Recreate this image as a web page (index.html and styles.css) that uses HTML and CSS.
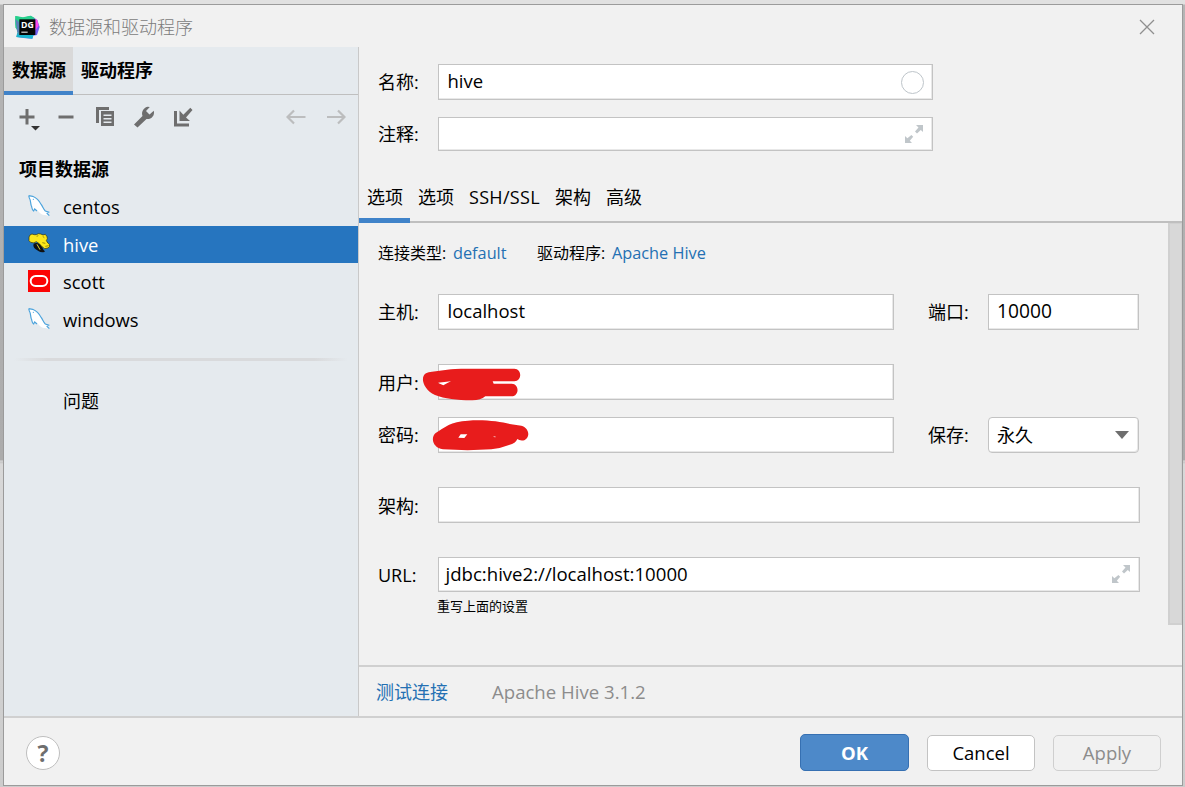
FILE: index.html
```html
<!DOCTYPE html>
<html lang="zh-CN">
<head>
<meta charset="utf-8">
<title>数据源和驱动程序</title>
<link rel="stylesheet" href="styles.css">
</head>
<body>
<svg class="defs" aria-hidden="true">
  <symbol id="dolphin" viewBox="0 0 66 66">
    <path d="M2 2 L14 4 C28 10 35 20 40 29 C46 39 47 44 52 48 L64 53 L58 56 L64 62 L50 60 C42 60 36 56 31 49 C27 45 24 43 20 43 L18 49 C11 43 13 38 10 32 C7 25 8 17 3 9 Z" fill="#fff"/>
    <path d="M14 4 C28 10 35 20 40 29 C46 39 47 44 52 48 L64 52 M56 54 L64 62 M2 2 L14 4 M2 2 L4 9 C9 17 7 25 10 32 C13 38 10 43 17 48 L20 42 L27 48" fill="none" stroke="#4ba3dc" stroke-width="3.500"/>
    <circle cx="16" cy="13" r="1.8" fill="#4ba3dc"/>
  </symbol>
  <symbol id="expand" viewBox="0 0 18 18">
    <path d="M11 0H18V7L15.800 4.900L12 8.400L10 6.400L13.500 2.500ZM0 11L2.400 13.200L6.400 10L8.200 11.800L4.800 15.700L7 18H0Z" fill="#c0c6ca"/>
  </symbol>
</svg>
<div class="dialog">
  <header class="titlebar">
    <svg class="logo" width="25" height="24" viewBox="0 0 75 72">
      <defs><linearGradient id="lg" x1="0" y1="0" x2="1" y2="1"><stop offset="0" stop-color="#21d789"/><stop offset=".4" stop-color="#3fa6b0"/><stop offset=".7" stop-color="#7b5cf0"/><stop offset="1" stop-color="#5a63ee"/></linearGradient></defs>
      <path d="M1 3L24 8 48 2 58 9 67 15 74 36 66 60 54 62 52 71 25 69 4 66 7 52 1 28Z" fill="url(#lg)"/>
      <path d="M1 3L24 7 46 2 59 9 40 15H13V48L1 38Z" fill="#27d08d"/>
      <path d="M1 12L13 22V52L7 52Z" fill="#5b80b8"/>
      <path d="M61 11L67 15 71 32 61 46Z" fill="#ff45ed"/>
      <path d="M7 55L13 60H56L52 71 4 66Z" fill="#1bb5cf"/>
      <rect x="13" y="13" width="48" height="47" fill="#050505"/>
      <text x="37" y="38" class="logo-text" text-anchor="middle">DG</text>
      <rect x="19" y="50" width="19" height="3" fill="#fff"/>
    </svg>
    <span class="title">数据源和驱动程序</span>
    <svg class="close" width="16" height="16" viewBox="0 0 16 16"><path d="M1 1L15 15M15 1L1 15" stroke="#8f8f8f" stroke-width="1.3"/></svg>
  </header>
  <div class="body">
    <aside class="sidebar">
      <nav class="side-tabs"><span class="side-tab active">数据源</span><span class="side-tab">驱动程序</span></nav>
      <div class="toolbar">
        <svg width="184" height="28" viewBox="0 0 184 28">
          <g fill="#6e6e6e">
            <path d="M6.500 6h3v6.500H15.500v3H9.500V21.500h-3v-6H.5v-3h6Z"/>
            <path d="M39.500 12.500h15v3h-15Z"/>
            <path d="M77 4h13v3H80v13h-3Z"/>
            <path fill-rule="evenodd" d="M82 8h13v15H82ZM84.500 11.500v1.500h8V11.500ZM84.500 15V16.500h8V15ZM84.500 18.500V20h8v-1.500Z"/>
            <path d="M115 21.500L123.500 13C122.200 9 124 5 128.500 3.700L130.800 4L127 8L130.500 11.500L134.800 7.700C136 12.500 132.500 16.500 127.500 16L118.500 24.500Z"/>
            <path d="M155 8h3v12.500h12v3H155Z"/>
            <path d="M160.500 7.500V18h10.500l-4-3.600L173.500 7 171.300 4.800 164.300 11.700Z"/>
          </g>
          <path d="M12 23h9L16.500 27.500Z" fill="#333"/>
        </svg>
        <svg width="60" height="16" viewBox="0 0 60 16" fill="none" stroke="#bcbdbe" stroke-width="2.200"><path d="M1 8H19.500M8 1.500L1.500 8L8 14.500M41 8H59M52 1.500L58.500 8L52 14.500"/></svg>
      </div>
      <div class="group">项目数据源</div>
      <ul class="sources">
        <li><svg width="22" height="22"><use href="#dolphin"/></svg>centos</li>
        <li class="selected"><svg width="22" height="22" viewBox="0 0 66 66">
          <path d="M17 32C25 27 38 31 43 42C45 53 54 54 49 57C37 60 31 54 23 49C16 43 15 38 17 32Z" fill="#111"/>
          <path d="M27 34L36 50" stroke="#e8d632" stroke-width="3"/>
          <path d="M3 12Q5 4 12 3Q18 6 25 5Q31 0 38 3Q46 8 52 4L57 11Q60 17 55 23Q59 31 65 35Q66 42 60 45L50 47 42 41 34 32 25 26Q17 32 8 28L3 23Z" fill="#fbe71c" stroke="#333208" stroke-width="2"/>
          <path d="M43 29L52 31M52 40L62 38M26 10L31 8M44 10L49 14" stroke="#6b6208" stroke-width="2"/>
        </svg>hive</li>
        <li><svg width="22" height="22" viewBox="0 0 66 66"><rect width="66" height="66" fill="#fb0505"/><rect x="8" y="18" width="50" height="30" rx="15" fill="none" stroke="#fff" stroke-width="6"/></svg>scott</li>
        <li><svg width="22" height="22"><use href="#dolphin"/></svg>windows</li>
      </ul>
      <div class="rule"></div>
      <div class="problems">问题</div>
    </aside>
    <main class="main">
      <section class="identity">
        <div class="row name"><label>名称:</label><div class="field"><span>hive</span><i class="ring"></i></div></div>
        <div class="row note"><label>注释:</label><div class="field"><svg class="expand" width="18" height="18"><use href="#expand"/></svg></div></div>
      </section>
      <nav class="tabs"><span class="tab active">选项</span><span class="tab">选项</span><span class="tab ssl">SSH/SSL</span><span class="tab">架构</span><span class="tab">高级</span></nav>
      <div class="scroll">
        <section class="form">
          <div class="meta"><span class="cn">连接类型:</span><a class="type">default</a><span class="cn">驱动程序:</span><a>Apache Hive</a></div>
          <div class="row host"><label>主机:</label><div class="field"><span>localhost</span></div><label class="second">端口:</label><div class="field small"><span class="num">10000</span></div></div>
          <div class="row user"><label>用户:</label><div class="field">
            <svg class="scribble" width="100" height="34" viewBox="183 263 300 102"><path fill="#e81c1c" fill-rule="evenodd" d="M213 274L270 267Q280 265 300 265H460C483 266 484 301 460 303H395L398 310H452C476 311 475 347 452 348H373Q358 361 330 360C290 360 250 355 222 344C185 327 177 289 195 279Q202 274 213 274ZM230 307L247 315Q260 307 270 303Z"/></svg>
          </div></div>
          <div class="row pass"><label>密码:</label><div class="field">
            <svg class="scribble" width="98" height="32" viewBox="212 416 294 96"><path fill="#e81c1c" fill-rule="evenodd" d="M262 434Q282 423 320 421C370 417 420 424 450 432L480 436C500 441 507 464 495 475C488 483 474 481 468 476Q463 489 443 494Q415 505 390 507Q320 512 245 507C215 503 207 474 222 459Q240 446 262 434ZM298 462L291 472L309 473L318 462ZM395 467L400 471L405 470Z"/></svg>
          </div><label class="second">保存:</label><div class="field small select"><span>永久</span><svg width="14" height="8" viewBox="0 0 14 8"><path d="M0 0H14L7 8Z" fill="#6e6e6e"/></svg></div></div>
          <div class="row schema"><label>架构:</label><div class="field"></div></div>
          <div class="row url"><label>URL:</label><div class="field"><span>jdbc:hive2://localhost:10000</span><svg class="expand" width="18" height="18"><use href="#expand"/></svg></div></div>
          <div class="hint">重写上面的设置</div>
        </section>
        <div class="scrollbar"></div>
      </div>
      <div class="test"><a>测试连接</a><span>Apache Hive 3.1.2</span></div>
    </main>
  </div>
  <footer class="footer">
    <span class="help">?</span>
    <button class="btn ok">OK</button><button class="btn cancel">Cancel</button><button class="btn apply" disabled>Apply</button>
  </footer>
</div>
</body>
</html>
```
FILE: styles.css
```css
* { box-sizing: border-box; }
body {
  margin: 0; width: 1185px; height: 787px; overflow: hidden; padding: 4px 2px 1px 3px;
  font: 18px/24px "Open Sans", "Noto Sans CJK SC", sans-serif; color: #000;
  background: linear-gradient(#e1e1e1 4px, #b5b5b5 5px, #acacac 460px, #dadada 461px, #c4c4c4 462px, #d8d8d8 464px, #ccc);
}
.defs { display: none; }
.dialog { width: 1180px; height: 782px; border: 1px solid #9b9b9b; background: #f1f1f1; display: flex; flex-direction: column; }
.titlebar { height: 42px; display: flex; align-items: center; padding: 2px 27px 0 11px; }
.logo-text { font: bold 26px "Open Sans", sans-serif; fill: #fff; }
.title { margin-left: 9px; color: #7c7c7c; font-weight: 300; }
.close { margin-left: auto; }
.body { height: 669px; display: flex; }

.sidebar { width: 355px; background: #e5eaee; border-right: 1px solid #c9c9c9; }
.side-tabs { height: 48px; display: flex; border-bottom: 1px solid #bfbfbf; font-weight: bold; white-space: nowrap; }
.side-tab { height: 48px; padding: 11px 8px 0; }
.side-tab.active { width: 69px; background: #d9d9d9; border-bottom: 4px solid #4083c9; }
.toolbar { height: 61px; display: flex; justify-content: space-between; padding: 8px 12px 0 15px; }
.toolbar svg:last-child { margin-top: 6px; }
.group { height: 32px; padding-left: 15px; font-weight: bold; line-height: 27px; }
.sources { list-style: none; margin: 0; padding: 0; height: 151px; display: grid; grid-template-rows: 38px 37px 38px 38px; }
.sources li { display: flex; align-items: center; gap: 13px; padding-left: 24px; font-size: 18.4px; }
.sources svg { margin-top: -2px; }
.sources .selected { background: #2675bf; color: #fff; }
.rule { height: 3px; margin: 19px 10px 28px; background: linear-gradient(90deg, transparent, #d9dadc 10%, #d9dadc 90%, transparent); }
.problems { padding-left: 59px; }

.main { width: 823px; }
.identity { height: 124px; padding: 17px 0 0 19px; }
.row { display: flex; align-items: center; }
.row label { width: 59.500px; flex: none; }
.field { position: relative; width: 456px; height: 36px; border: 1px solid #c3c3c3; background: #fff; display: flex; align-items: center; padding: 0 9px; box-shadow: inset -1px -1px #e8e8e8; }
.field span { font-size: 18.5px; margin-top: -2px; }
.identity .field { width: 495px; justify-content: space-between; }
.note { margin-top: 17px; }
.note .field { height: 34px; }
.field .expand { margin-left: auto; }
.ring { width: 23px; height: 23px; border: 1.500px solid #bec5ca; border-radius: 50%; margin-right: -1px; }
.tabs { height: 52px; display: flex; gap: 15px; padding: 14px 0 0 8px; border-bottom: 2px solid #bfbfbf; }
.tab.active { height: 38px; margin: 0 -7px 0 -8px; padding: 0 7px 0 8px; border-bottom: 5px solid #4083c9; }
.ssl { width: 71px; letter-spacing: .3px; }
.scroll { height: 442px; display: flex; justify-content: space-between; }
.form { width: 790px; padding: 18px 0 0 19px; }
.scrollbar { width: 14px; height: 402px; background: #d8d8d8; border: solid #d0d0d0; border-width: 1px 1px 2px 2px; }
.meta { display: flex; font-size: 16px; height: 24px; }
.meta .cn { width: 75px; white-space: nowrap; }
a { color: #2470b3; }
.meta a { font-size: 16.3px; }
.meta .type { width: 84px; }
.host { margin-top: 29px; }
.second { margin-left: 34.500px; }
.row .second { width: 60px; }
.field.small { width: 151px; }
.field .num { font-size: 19.2px; margin-left: -1px; }
.user { margin-top: 34px; }
.user label { padding-top: 2px; }
.pass { margin-top: 17px; }
.select { border-radius: 4px; justify-content: space-between; padding: 0 9px 0 8px; }
.select span { margin-top: 0; font-size: 18px; }
.schema { margin-top: 34px; }
.schema label { padding-top: 2px; }
.schema .field, .url .field { width: 702px; }
.url { margin-top: 34px; }
.url .field { height: 35px; padding-left: 7px; }
.url .field span { font-size: 18.6px; margin-top: -1px; }
.url .expand { margin-top: -1px; }
.hint { margin: 2px 0 0 59px; font-size: 13px; }
.scribble { position: absolute; }
.user .scribble { left: -17px; top: 3px; }
.pass .scribble { left: -7px; top: 1px; }
.test { height: 51px; border-top: 2px solid #d0d0d0; display: flex; gap: 44px; padding: 13px 0 0 17px; }
.test span { color: #8c8c8c; font-size: 18.6px; }

.footer { height: 69px; border-top: 2px solid #d0d0d0; display: flex; padding: 16px 21px 0 22px; }
.help { width: 34px; height: 34px; margin: 2px auto 0 0; border: 1px solid #bfbfbf; border-radius: 50%; background: #fff; color: #6e6e6e; text-align: center; font: bold 23px/32px "Open Sans", sans-serif; }
.btn { height: 36px; margin-top: 1px; border: 1px solid #c3c3c3; border-radius: 5px; background: #fff; font: 18.5px "Open Sans", sans-serif; padding: 0 0 1px; color: #000; }
.ok { width: 109px; height: 37px; margin-top: 0; background: #4d89c9; border-color: #3670b2; color: #fff; font-weight: bold; }
.cancel { width: 108px; margin-left: 18px; }
.apply { width: 108px; margin-left: 18px; background: #f1f1f1; color: #8c8c8c; border-color: #cfcfcf; }
```
